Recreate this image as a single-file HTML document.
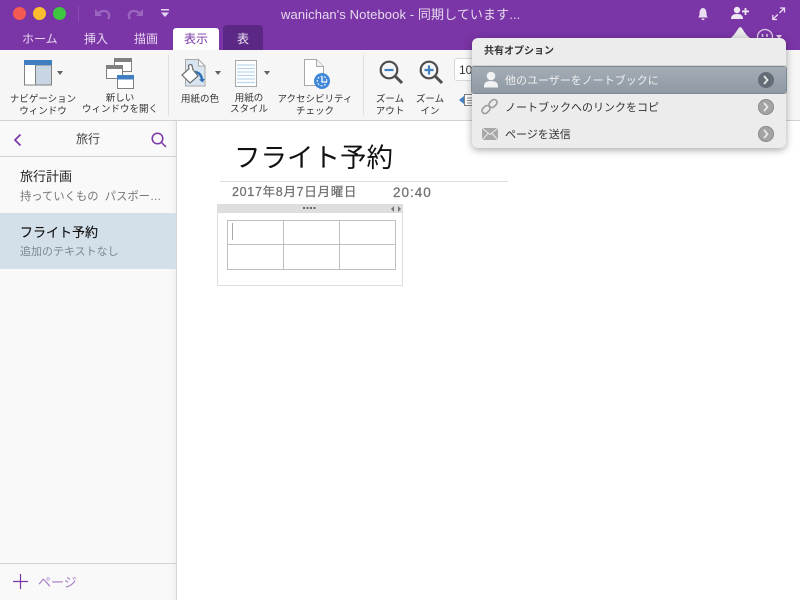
<!DOCTYPE html>
<html lang="ja"><head><meta charset="utf-8"><style>
html,body{margin:0;padding:0;width:800px;height:600px;overflow:hidden;background:#fff}
body{position:relative;font-family:"Liberation Sans","Noto Sans CJK JP",sans-serif;color:#333}
.a{position:absolute}
.t{position:absolute;white-space:nowrap;line-height:1}
.c{text-align:center;transform:translateX(-50%)}
.rl{position:absolute;font-size:9.5px;line-height:12px;text-align:center;color:#333;white-space:nowrap;transform:translateX(-50%)}
.tab{position:absolute;top:25px;font-size:12px;color:#e6d6f0;line-height:1;white-space:nowrap}
svg{position:absolute;overflow:visible}
.dot{position:absolute;top:7px;width:13px;height:13px;border-radius:50%}
.arr{position:absolute;width:16px;height:16px;border-radius:50%;background:#a3a3a3;box-shadow:inset 0 0 0 1px #8f8f8f}
</style></head><body>
<!-- title bar -->
<div class="a" style="left:0;top:0;width:800px;height:50px;background:#7a35a6"></div>
<div class="dot" style="left:13px;background:#f25a52"></div>
<div class="dot" style="left:33px;background:#fbbd2e"></div>
<div class="dot" style="left:53px;background:#3fc63f"></div>
<div class="a" style="left:78px;top:6px;width:1px;height:16px;background:#8a4ab3"></div>
<svg style="left:95px;top:8px" width="16" height="12" fill="none"><path d="M0 1v7h7z" fill="#9a66bf"/><path d="M3.500 5.500C6.500 2 12 2 13.800 5.800c.8 1.800.3 3.700-.8 5.200" stroke="#9a66bf" stroke-width="2.400"/></svg>
<svg style="left:127px;top:8px" width="16" height="12" fill="none"><path d="M16 1v7H9z" fill="#9a66bf"/><path d="M12.500 5.500C9.500 2 4 2 2.200 5.800c-.8 1.800-.3 3.700.8 5.200" stroke="#9a66bf" stroke-width="2.400"/></svg>
<svg style="left:160px;top:9px" width="10" height="9"><rect x="1" y="0" width="8" height="1.500" fill="#e6d6f0"/><path d="M1 3.500h8L5 8z" fill="#e6d6f0"/></svg>
<div class="t" style="left:281px;top:8px;font-size:13px;color:#e6d9ee;letter-spacing:.1px">wanichan's Notebook - 同期しています...</div>
<!-- bell / share / expand -->
<svg style="left:696px;top:7px" width="14" height="14" fill="#eadcf2"><path d="M2 10.500c1.200-1 1.400-2 1.500-4.500C3.700 3 5 1 7 1s3.300 2 3.500 5c.1 2.500.3 3.500 1.500 4.500z"/><rect x="5.500" y="11.500" width="3" height="1.500" rx=".7"/></svg>
<svg style="left:731px;top:6px" width="19" height="14" fill="#f1e8f6"><circle cx="6" cy="4" r="3.200"/><path d="M0 13c0-3.500 2-5 6-5s6 1.500 6 5z"/><rect x="11" y="4.500" width="7" height="1.800"/><rect x="13.600" y="2" width="1.800" height="7"/></svg>
<svg style="left:772px;top:7px" width="13" height="13" fill="none" stroke="#eadcf2" stroke-width="1.300"><path d="M8 1h4.500v4.500M12.500 1L7.500 6M5 12.500H.8V8M.8 12.500L5.800 7.500"/></svg>
<div class="tab" style="left:22px;top:33px">ホーム</div>
<div class="tab" style="left:84px;top:33px">挿入</div>
<div class="tab" style="left:134px;top:33px">描画</div>
<div class="a" style="left:173px;top:28px;width:46px;height:22px;background:#fff;border-radius:3px 3px 0 0"></div>
<div class="tab" style="left:184px;top:33px;color:#7a35a6">表示</div>
<div class="a" style="left:223px;top:25px;width:40px;height:25px;background:#5c2885;border-radius:4px 4px 0 0"></div>
<div class="tab" style="left:237px;top:33px;color:#f0e6f5">表</div>
<svg style="left:756px;top:28px" width="28" height="14" fill="none" stroke="#e0cfea" stroke-width="1.300"><circle cx="9" cy="9" r="7.500"/><path d="M6.500 6v3M11 6v3" stroke-width="1.500"/><path d="M20 7h6l-3 4z" fill="#e0cfea" stroke="none"/></svg>

<!-- ribbon -->
<div class="a" style="left:0;top:50px;width:800px;height:70px;background:#f6f6f6;border-bottom:1px solid #d2d2d2"></div>
<div class="a" style="left:168px;top:55px;width:1px;height:61px;background:#e0e0e0"></div>
<div class="a" style="left:363px;top:55px;width:1px;height:61px;background:#e0e0e0"></div>
<!-- nav icon -->
<svg style="left:24px;top:60px" width="28" height="26"><rect x=".5" y=".5" width="27" height="24.500" fill="#fff" stroke="#808080"/><rect x="11.500" y="5" width="16" height="20" fill="#c8d6e4" stroke="#808080"/><rect x="0" y="0" width="28" height="5" fill="#3f7fc0"/></svg>
<svg style="left:57px;top:71px" width="6" height="4"><path d="M0 0h6L3 4z" fill="#606060"/></svg>
<div class="rl" style="left:43px;top:94px">ナビゲーション<br>ウィンドウ</div>
<!-- new window icon -->
<svg style="left:105px;top:57px" width="30" height="33"><rect x="9.500" y="1.500" width="17" height="13" fill="#fff" stroke="#808080"/><rect x="9" y="1" width="18" height="4" fill="#808080"/><rect x="1.500" y="8.500" width="16" height="13" fill="#fff" stroke="#808080"/><rect x="1" y="8" width="17" height="4" fill="#808080"/><rect x="12.500" y="18.500" width="16" height="13" fill="#fff" stroke="#808080"/><rect x="12" y="18" width="17" height="4.500" fill="#3f7fc0"/></svg>
<div class="rl" style="left:120px;top:93px;line-height:11px">新しい<br>ウィンドウを開く</div>
<!-- paper color -->
<svg style="left:181px;top:58px" width="30" height="32"><path d="M4.500 1.500h13l6.500 6.500v20H4.500z" fill="#d8e4f0" stroke="#a8a8a8"/><path d="M17.500 1.500V8H24z" fill="#fff" stroke="#a8a8a8"/><path d="M14 14c4 .5 6.500 3 7 8" fill="none" stroke="#2f6fb5" stroke-width="2.400"/><path d="M18 21.500l3.500 3 2.500-3.800z" fill="#2f6fb5"/><path d="M1 17l9-8 7 9-8 7z" fill="#fff" stroke="#707070" stroke-width="1.200"/><path d="M8 11L7.500 8c-.3-1.500 3-2 3.500-.5L12 12" fill="#fff" stroke="#707070" stroke-width="1.300"/></svg>
<svg style="left:215px;top:71px" width="6" height="4"><path d="M0 0h6L3 4z" fill="#606060"/></svg>
<div class="rl" style="left:200px;top:94px">用紙の色</div>
<!-- paper style -->
<svg style="left:235px;top:60px" width="22" height="27"><rect x=".5" y=".5" width="21" height="26" fill="#fff" stroke="#a8a8a8"/><path d="M2 5h18M2 8.500h18M2 12h18M2 15.500h18M2 19h18M2 22.500h18" stroke="#bcd6ee" stroke-width="1.200"/></svg>
<svg style="left:264px;top:71px" width="6" height="4"><path d="M0 0h6L3 4z" fill="#606060"/></svg>
<div class="rl" style="left:249px;top:93px;line-height:11px">用紙の<br>スタイル</div>
<!-- accessibility -->
<svg style="left:304px;top:59px" width="30" height="30"><path d="M.5.500h12l7 7v19H.500z" fill="#fff" stroke="#a8a8a8"/><path d="M12.500.500v7h7" fill="#f2f2f2" stroke="#a8a8a8"/><circle cx="18" cy="22" r="8" fill="#3f87d8"/><path d="M18 18v5h4" fill="none" stroke="#fff" stroke-width="1.300"/><circle cx="18" cy="22" r="4.800" fill="none" stroke="#fff" stroke-dasharray="2 1.500"/></svg>
<div class="rl" style="left:315px;top:94px">アクセシビリティ<br>チェック</div>
<!-- zoom -->
<svg style="left:379px;top:60px" width="25" height="25" fill="none"><circle cx="10" cy="10" r="8.300" stroke="#4d4d4d" stroke-width="2.200"/><path d="M16.500 16.500l6.500 6.500" stroke="#4d4d4d" stroke-width="3"/><path d="M5.500 10h9" stroke="#3f7fc0" stroke-width="2.200"/></svg>
<div class="rl" style="left:390px;top:94px">ズーム<br>アウト</div>
<svg style="left:419px;top:60px" width="25" height="25" fill="none"><circle cx="10" cy="10" r="8.300" stroke="#4d4d4d" stroke-width="2.200"/><path d="M16.500 16.500l6.500 6.500" stroke="#4d4d4d" stroke-width="3"/><path d="M5.500 10h9M10 5.500v9" stroke="#3f7fc0" stroke-width="2.200"/></svg>
<div class="rl" style="left:430px;top:94px">ズーム<br>イン</div>
<div class="a" style="left:454px;top:58px;width:30px;height:23px;background:#fff;border:1px solid #d8d8d8;border-radius:3px;box-sizing:border-box"></div>
<div class="t" style="left:459px;top:64px;font-size:12px;color:#333">100</div>
<svg style="left:459px;top:94px" width="22" height="13"><path d="M0 6l5-4v8z" fill="#3f7fc0"/><rect x="5.500" y=".5" width="12" height="11" fill="#fff" stroke="#808080"/><path d="M8 4h8M8 6.500h8M8 9h8" stroke="#909090"/></svg>

<!-- sidebar -->
<div class="a" style="left:0;top:121px;width:176px;height:479px;background:#f9f9f9;border-right:1px solid #d8d8d8;box-shadow:inset -8px 0 8px -8px #e4e4e4"></div>
<div class="a" style="left:0;top:156px;width:176px;height:1px;background:#d2d2d2"></div>
<svg style="left:13px;top:133px" width="9" height="14" fill="none" stroke="#7a35a6" stroke-width="1.700"><path d="M7.500 1.500L2 7l5.500 5.500"/></svg>
<div class="t c" style="left:88px;top:133px;font-size:12px;color:#444">旅行</div>
<svg style="left:151px;top:132px" width="16" height="16" fill="none" stroke="#7a35a6" stroke-width="1.500"><circle cx="6.500" cy="6.500" r="5.300"/><path d="M10.500 10.500l4.500 4.500"/></svg>
<div class="t" style="left:20px;top:170px;font-size:13px;color:#222">旅行計画</div>
<div class="t" style="left:20px;top:192px;font-size:11.300px;color:#777">持っていくもの&nbsp; パスポー…</div>
<div class="a" style="left:0;top:213px;width:176px;height:56px;background:#d3dfe9"></div>
<div class="t" style="left:20px;top:226px;font-size:13px;color:#111;-webkit-text-stroke:.15px #111">フライト予約</div>
<div class="t" style="left:20px;top:247px;font-size:11px;color:#7f8890">追加のテキストなし</div>
<div class="a" style="left:0;top:563px;width:176px;height:1px;background:#d2d2d2"></div>
<svg style="left:13px;top:574px" width="16" height="16" stroke="#7a35a6" stroke-width="1.200"><path d="M0 7.500h15M7.500 0v15"/></svg>
<div class="t" style="left:38px;top:576px;font-size:13px;color:#a778c8">ページ</div>

<!-- page -->
<div class="t" style="left:234px;top:145px;font-size:26.500px;color:#111">フライト予約</div>
<div class="a" style="left:220px;top:181px;width:288px;height:1px;background:#dcdcdc"></div>
<div class="t" style="left:232px;top:186px;font-size:12.500px;letter-spacing:.7px;color:#707070;-webkit-text-stroke:.25px #707070">2017年8月7日月曜日</div>
<div class="t" style="left:393px;top:186px;font-size:13.500px;letter-spacing:1px;color:#707070;-webkit-text-stroke:.25px #707070">20:40</div>
<div class="a" style="left:217px;top:204px;width:186px;height:82px;box-sizing:border-box;border:1px solid #dedede;background:#fff"></div>
<div class="a" style="left:217px;top:204px;width:186px;height:9px;background:#dedede"></div>
<svg style="left:303px;top:207px" width="14" height="3" fill="#666"><rect x="0" width="2" height="2"/><rect x="3.500" width="2" height="2"/><rect x="7" width="2" height="2"/><rect x="10.500" width="2" height="2"/></svg>
<svg style="left:391px;top:206px" width="11" height="6" fill="#777"><path d="M3 0v6L0 3zM7 0v6l3-3z"/></svg>
<svg style="left:227px;top:220px" width="170" height="50" fill="none" stroke="#c0c0c0"><rect x=".5" y=".5" width="168" height="49"/><path d="M56.500 0v50M112.500 0v50M0 24.500h169"/><path d="M5.500 3v17" stroke="#aaa"/></svg>

<!-- popup -->
<svg style="left:725px;top:25px" width="32" height="15"><path d="M0 15C6 15 9 10 13 4c1.500-2.500 3-2.500 4.500 0C21 10 25 15 32 15z" fill="#eaeaea"/></svg>
<div class="a" style="left:472px;top:38px;width:314px;height:110px;background:#ececec;border-radius:6px;box-shadow:0 2px 8px rgba(0,0,0,.35)"></div>
<div class="a" style="left:472px;top:65px;width:314px;height:1px;background:#d2d2d2"></div>
<div class="t" style="left:484px;top:47px;font-size:10px;color:#333;font-weight:700">共有オプション</div>
<div class="a" style="left:472px;top:67px;width:314px;height:26px;background:linear-gradient(#a4adb6,#8f99a3);border-radius:2px;box-shadow:0 0 0 1px #7f8993"></div>
<svg style="left:483px;top:71px" width="16" height="17" fill="#f2f2f2"><circle cx="8" cy="5" r="4.300"/><path d="M1 16.500c-.6-5 2.500-6.500 7-6.500s7.600 1.500 7 6.500z"/></svg>
<div class="t" style="left:505px;top:76px;font-size:11px;color:#f0f0f0">他のユーザーをノートブックに</div>
<div class="arr" style="left:758px;top:72px;background:#646c76;box-shadow:none"></div>
<svg style="left:481px;top:98px" width="17" height="17" fill="none" stroke="#999" stroke-width="1.500"><rect x="9" y="1" width="6" height="9" rx="3" transform="rotate(45 12 5.500)"/><rect x="2" y="7" width="6" height="9" rx="3" transform="rotate(45 5 11.500)"/></svg>
<div class="t" style="left:505px;top:103px;font-size:11px;color:#333">ノートブックへのリンクをコピ</div>
<div class="arr" style="left:758px;top:99px"></div>
<svg style="left:482px;top:128px" width="16" height="12"><rect width="16" height="12" fill="#a8a8a8"/><path d="M0 0l8 6.500L16 0M0 12l6-6.500M16 12l-6-6.500" fill="none" stroke="#eee" stroke-width="1"/></svg>
<div class="t" style="left:505px;top:130px;font-size:11px;color:#333">ページを送信</div>
<div class="arr" style="left:758px;top:126px"></div>
<svg style="left:762px;top:75px" width="8" height="64" fill="none" stroke="#e8e8e8" stroke-width="1.800"><path d="M2 1l3.500 4L2 9M2 28l3.500 4L2 36M2 55l3.500 4L2 63"/></svg>
</body></html>
